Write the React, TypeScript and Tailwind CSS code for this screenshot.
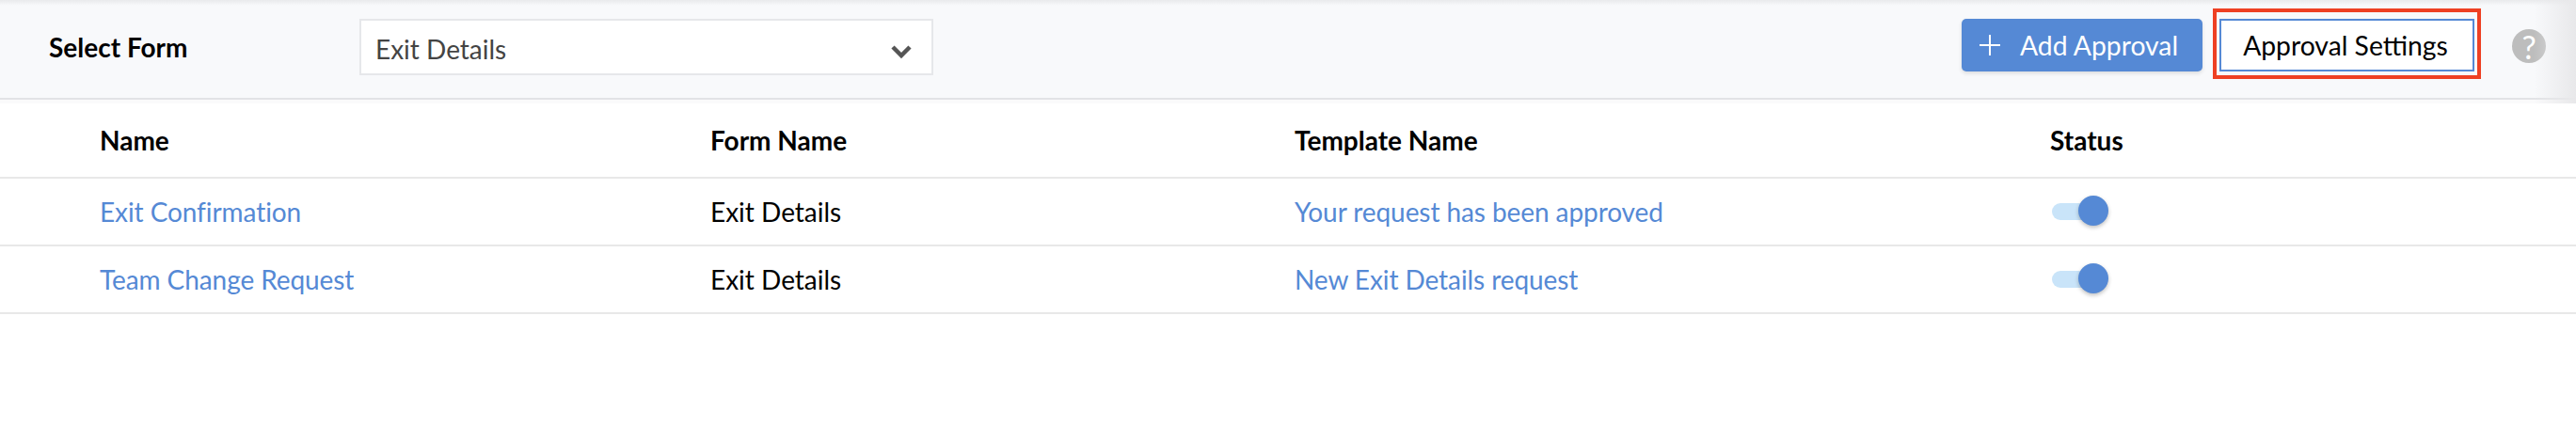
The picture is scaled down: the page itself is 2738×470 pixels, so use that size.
const rows = [
  { name: 'Exit Confirmation', form: 'Exit Details', template: 'Your request has been approved' },
  { name: 'Team Change Request', form: 'Exit Details', template: 'New Exit Details request' },
]

const gridCols = 'grid grid-cols-[649px_621px_803px_1fr] pl-[106px] items-center'

function Toggle() {
  return (
    <div className="relative ml-[2px] w-[59px] h-[18px] rounded-full bg-[#c9e4f9]">
      <div className="absolute right-[-1px] top-[-8px] w-8 h-8 rounded-full bg-[#5589d5] shadow-[0_2px_4px_rgba(0,0,0,0.25)]" />
    </div>
  )
}

export default function App() {
  return (
    <div className="relative w-[2738px] h-[470px] overflow-hidden bg-white font-['Lato','Noto_Sans',sans-serif] text-[28px] text-black">
      <div className="relative h-[106px] pt-5 pl-[52px] pr-8 flex items-start bg-[#f8f9fb] border-b-2 border-[#e2e3e6]">
        <span className="w-[330px] h-[60px] flex items-center font-bold">Select Form</span>
        <div className="w-[610px] h-[60px] pl-[15px] pr-[21px] flex items-center justify-between bg-white border-2 border-[#e6e7ea] text-[#444444]">
          <span className="pt-1">Exit Details</span>
          <svg width="22" height="16" viewBox="0 0 22 16" fill="none" className="mt-[9px]">
            <path d="M2 3l9 9 9-9" stroke="#555555" strokeWidth="4.5" />
          </svg>
        </div>
        <div className="ml-auto flex items-start">
          <button className="w-[256px] h-14 pl-[19px] flex items-center gap-[21px] rounded-[5px] bg-[#5589d5] text-white text-[28.3px] shadow-[0_2px_4px_rgba(0,0,0,0.12)]">
            <svg width="22" height="22" viewBox="0 0 22 22" fill="none">
              <path d="M11 0v22M0 11h22" stroke="white" strokeWidth="2" />
            </svg>
            Add Approval
          </button>
          <div className="ml-[11px] mt-[-11px] pt-[7px] pb-1 px-[3px] border-4 border-[#ee4023]">
            <button className="block w-[271px] h-14 pr-[3px] bg-white border-2 border-[#5589d5] text-[28.3px]">Approval Settings</button>
          </div>
          <div className="ml-[33px] mt-[11px] w-9 h-9 rounded-full bg-[#bdbdbd] text-white text-[34px] flex items-center justify-center">?</div>
        </div>
      </div>
      <div className="h-1 bg-[#fafafb]" />

      <div className={`${gridCols} h-[80px] border-b-[2px] border-[#e8e8e8] font-bold`}>
        <span>Name</span>
        <span>Form Name</span>
        <span>Template Name</span>
        <span>Status</span>
      </div>
      {rows.map((row) => (
        <div key={row.name} className={`${gridCols} h-[72px] border-b-[2px] border-[#e8e8e8]`}>
          <a className="text-[#5589d5] tracking-[-0.08px] [font-variant-ligatures:none]">{row.name}</a>
          <span>{row.form}</span>
          <a className="text-[#5589d5] tracking-[-0.08px]">{row.template}</a>
          <Toggle />
        </div>
      ))}

      <div className="absolute inset-x-0 top-0 h-[6px] bg-gradient-to-b from-[#e9eaec] to-transparent" />
      <div className="absolute top-0 right-0 w-[45px] h-[110px] bg-gradient-to-l from-[#e8e8ea] to-transparent" />
    </div>
  )
}
